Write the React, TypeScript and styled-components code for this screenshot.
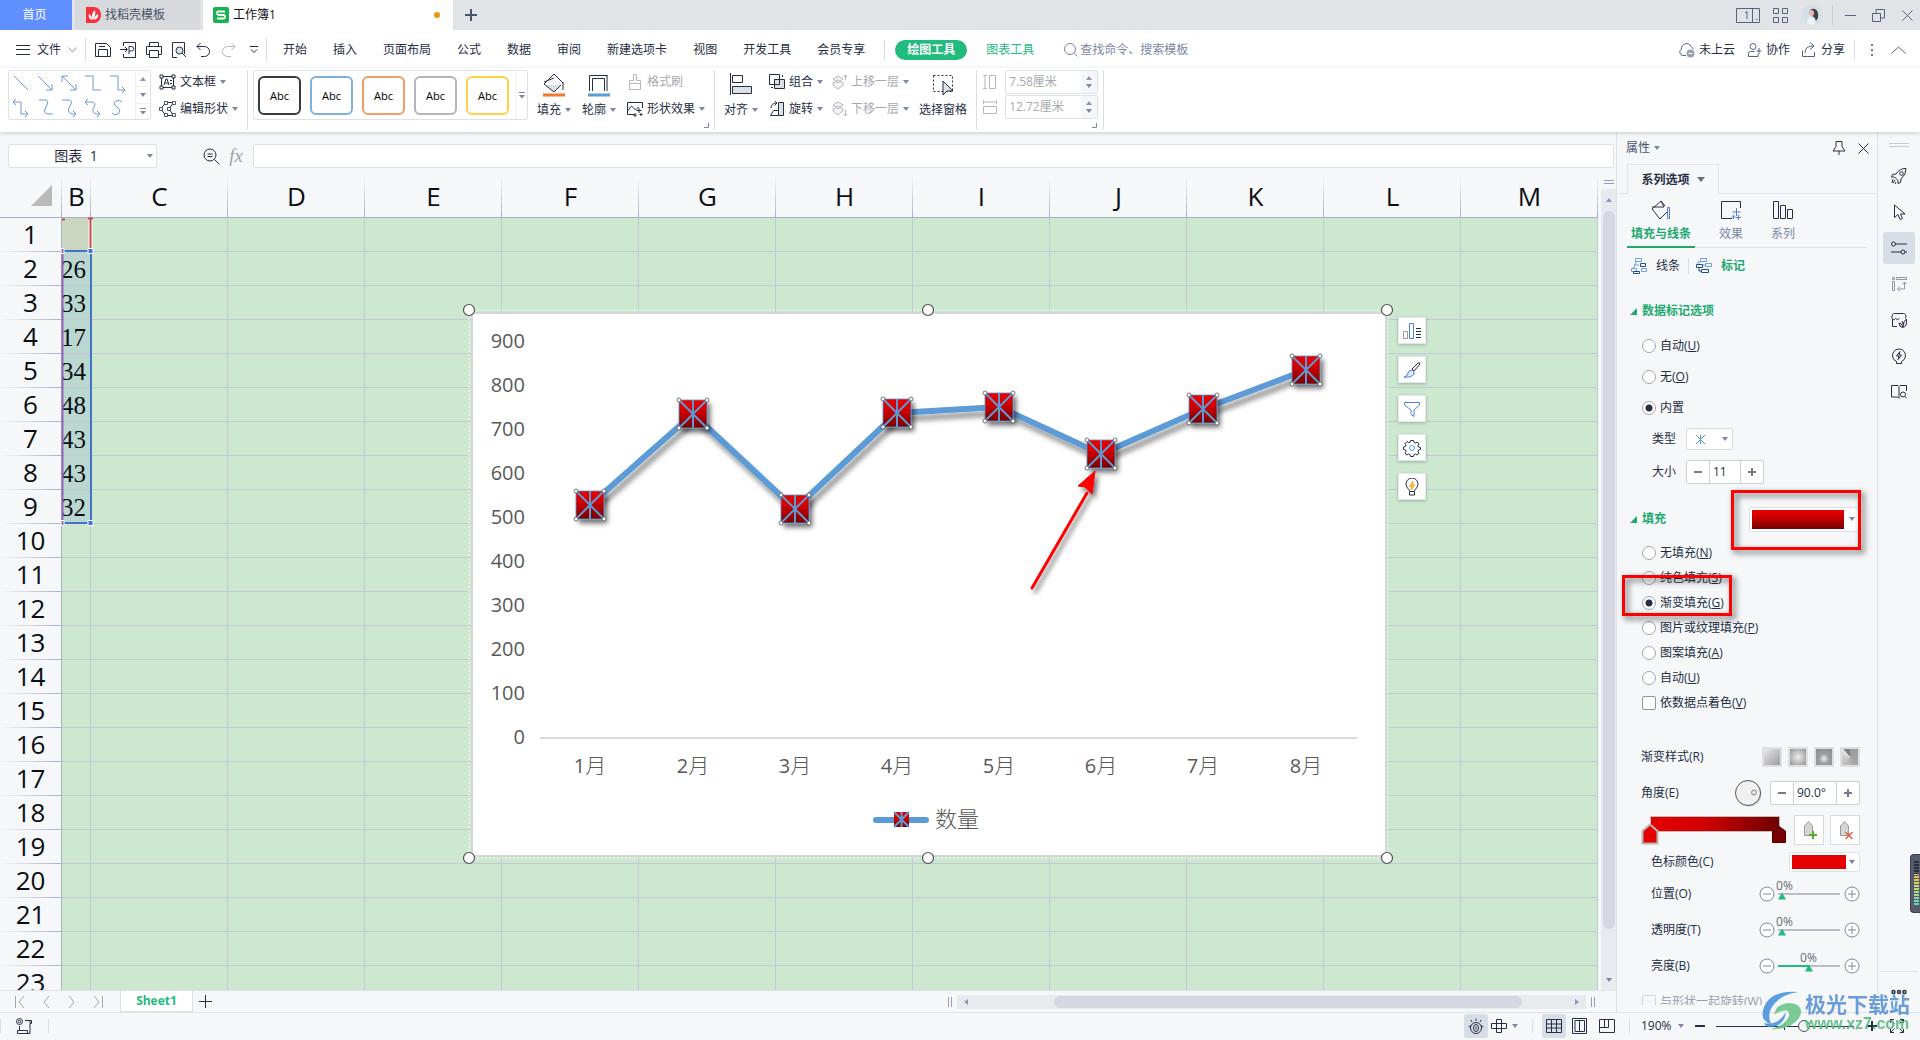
import React from 'react';
import styled, { createGlobalStyle, css } from 'styled-components';

const c = {
  ink: '#262E44',
  muted: '#7C87A3',
  faint: '#A6A9AF',
  line: '#DEE1E9',
  pane: '#F5F7F9',
  green: '#21BB7E',
  deepGreen: '#1FA971',
  grid: '#C1C9D6',
  head: '#A9B1C8',
  cell: '#CCE8CF',
  blue: '#6E96DB',
};

const Global = createGlobalStyle`
  * { box-sizing: border-box; }
  html, body, #root { height: 100%; }
  body {
    margin: 0;
    overflow: hidden;
    background: ${c.pane};
    color: ${c.ink};
    font: 12px/16px "Open Sans", "Noto Sans CJK SC", sans-serif;
  }
  button, input, select { font: inherit; color: inherit; margin: 0; }
  button { border: 0; background: none; padding: 0; white-space: nowrap; }
  svg { display: block; flex: none; }
`;

const App_ = styled.div`
  height: 100vh;
  display: flex;
  flex-direction: column;
`;

/* ---------- icons ---------- */
type IconProps = { w?: number; h?: number; color?: string; sw?: number; fill?: string; children: React.ReactNode };
const Icon = ({ w = 16, h = 16, color = c.ink, sw = 1, fill = 'none', children }: IconProps) => (
  <svg width={w} height={h} viewBox={`0 0 ${w} ${h}`} fill={fill} stroke={color} strokeWidth={sw} aria-hidden="true">
    {children}
  </svg>
);
const Caret = ({ color = c.muted }: { color?: string }) => (
  <svg width="6" height="4" viewBox="0 0 6 4" fill={color} aria-hidden="true"><path d="M0 0h6L3 4z" /></svg>
);
const CaretUp = () => (
  <svg width="6" height="4" viewBox="0 0 6 4" fill="#8C98B5" aria-hidden="true"><path d="M0 4h6L3 0z" /></svg>
);
const MoreCaret = () => (
  <Icon w={6} h={8} color={c.muted}><path d="M0 1.5h6" /><path d="M0 4h6L3 7.5z" fill={c.muted} stroke="none" /></Icon>
);

/* ---------- title bar ---------- */
const TitleBar = styled.header`
  height: 30px;
  flex: none;
  display: flex;
  background: #E1E3E6;
`;
const HomeTab = styled.button`
  width: 72px;
  padding-right: 3px;
  margin-right: 3px;
  background: #6090FF;
  color: #fff;
`;
const DocTab = styled.button<{ $active?: boolean; $w: number }>`
  width: ${p => p.$w}px;
  display: flex;
  align-items: center;
  gap: 4px;
  padding: 0 13px 0 ${p => (p.$active ? 10 : 11)}px;
  margin-right: 3px;
  background: ${p => (p.$active ? '#fff' : '#D8D9DC')};
  color: ${p => (p.$active ? '#111' : '#4A5166')};
`;
const Unsaved = styled.i`
  width: 6px;
  height: 6px;
  border-radius: 50%;
  margin-left: auto;
  background: #E69A0B;
`;
const IconButton = styled.button<{ $w?: number; $h?: number; $on?: boolean }>`
  width: ${p => p.$w ?? 24}px;
  height: ${p => p.$h ?? 24}px;
  flex: none;
  display: flex;
  align-items: center;
  justify-content: center;
  border-radius: 2px;
  background: ${p => (p.$on ? '#D9DEE6' : 'none')};
`;
const WindowTools = styled.div`
  margin-left: auto;
  padding-right: 1px;
  display: flex;
  align-items: center;
`;
const Rule = styled.i<{ $h?: number; $m?: string; $color?: string }>`
  width: 1px;
  flex: none;
  height: ${p => p.$h ?? 20}px;
  margin: ${p => p.$m ?? '0'};
  background: ${p => p.$color ?? '#DADDE5'};
`;

const Title = () => (
  <TitleBar>
    <HomeTab>首页</HomeTab>
    <DocTab $w={125}>
      <svg width="15" height="16" viewBox="0 0 15 16" aria-hidden="true">
        <path d="M0 0h8a7 8 0 0 1 7 8 7 8 0 0 1-7 8H0z" fill="#F7303E" />
        <path d="M7 13C5 10 6 5 9 3c1 3 0 7-2 10zM6 13C3 12 2 9 3 7c2 1 3 3 3 6zM8 13c3-1 5-3 4-6-2 1-4 3-4 6z" fill="#fff" />
      </svg>
      找稻壳模板
    </DocTab>
    <DocTab $w={250} $active>
      <svg width="16" height="16" viewBox="0 0 16 16" aria-hidden="true">
        <rect width="16" height="16" rx="2" fill="#17B351" />
        <path d="M12 4.500H5.500Q4 4.500 4 6T5.500 8h5Q12 8 12 9.700T10.500 11.500H4" fill="none" stroke="#fff" strokeWidth="1.800" />
      </svg>
      工作簿1
      <Unsaved />
    </DocTab>
    <IconButton $w={30} $h={30} aria-label="新建">
      <Icon w={12} h={12} color="#48536E" sw={2}><path d="M6 0v12M0 6h12" /></Icon>
    </IconButton>
    <WindowTools>
      <IconButton $w={36} aria-label="窗口布局">
        <Icon w={24} h={15} color="#56627F"><path d="M.5.500h23v14H.5zM16.500.500v14M9 5l2-1.500V11M20 11.500h1.500" /></Icon>
      </IconButton>
      <IconButton $w={28} aria-label="应用">
        <Icon w={15} h={15} color="#56627F"><path d="M.5.500h5v5h-5zM9.500.500h5v5h-5zM.5 9.500h5v5h-5zM9.500 9.500h5v5h-5z" /></Icon>
      </IconButton>
      <IconButton $w={36} aria-label="账户">
        <svg width="20" height="20" viewBox="0 0 20 20" aria-hidden="true">
          <circle cx="10" cy="10" r="10" fill="#D0E1E8" />
          <path d="M7 8q1-5 6-4 4 2 3 9l-2 3q-1-4-4-5z" fill="#4A3E44" />
          <ellipse cx="9.500" cy="8" rx="2.500" ry="3" fill="#E4BEB0" />
          <path d="M5 18q0-5 4-6 4 1 4 7-4 2-8-1z" fill="#F1F4F6" />
        </svg>
      </IconButton>
      <Rule $m="0 6px 0 2px" $color="#C9CCD2" />
      <IconButton $w={22} aria-label="最小化"><Icon w={11} h={11} color="#56627F"><path d="M0 5.500h11" /></Icon></IconButton>
      <IconButton $w={34} aria-label="还原">
        <Icon w={13} h={13} color="#56627F"><path d="M.5 4.500h8v8h-8zM4 4V.500h8.500V9H9" /></Icon>
      </IconButton>
      <IconButton $w={24} aria-label="关闭"><Icon w={11} h={11} color="#56627F"><path d="M.5.500l10 10M10.500.500l-10 10" /></Icon></IconButton>
    </WindowTools>
  </TitleBar>
);

/* ---------- menu row ---------- */
const MenuBar = styled.nav`
  height: 38px;
  flex: none;
  display: flex;
  align-items: center;
  background: #fff;
  padding: 2px 7px 0 16px;
`;
const FileButton = styled.button`
  display: flex;
  align-items: center;
  gap: 7px;
`;
const MenuItems = styled.div`
  display: flex;
  gap: 26px;
  margin-left: 16px;
`;
const ToolPill = styled.button`
  height: 20px;
  padding: 0 12px;
  margin-left: 10px;
  border-radius: 10px;
  background: ${c.green};
  color: #fff;
  font-weight: 700;
`;
const GreenItem = styled.button`
  margin: 0 30px 0 19px;
  color: ${c.green};
`;
const SearchBox = styled.label`
  display: flex;
  align-items: center;
  gap: 2px;
  color: ${c.muted};
`;
const SearchInput = styled.input`
  width: 140px;
  border: 0;
  padding: 0;
  outline: 0;
  background: none;
  &::placeholder { color: ${c.muted}; opacity: 1; }
`;
const MenuRight = styled.div`
  margin-left: auto;
  display: flex;
  align-items: center;
`;
const TextTool = styled.button<{ $gap?: number; $mr?: number; $off?: boolean }>`
  display: flex;
  align-items: center;
  gap: ${p => p.$gap ?? 4}px;
  margin-right: ${p => p.$mr ?? 0}px;
  color: ${p => (p.$off ? c.faint : 'inherit')};
`;

const menus = ['开始', '插入', '页面布局', '公式', '数据', '审阅', '新建选项卡', '视图', '开发工具', '会员专享'];

const Menu = () => (
  <MenuBar>
    <FileButton>
      <Icon w={14} h={10}><path d="M0 .500h14M0 4.500h14M0 9.500h14" /></Icon>
      文件
      <Icon w={9} h={6} color="#8A93A8"><path d="M.5.500l4 4.500 4-4.500" /></Icon>
    </FileButton>
    <Rule $h={24} $m="0 4px 0 8px" />
    <IconButton $w={25} aria-label="保存"><Icon><path d="M.5 1.500h11l4 4v9H.5zM3.500 14V7.500h9V14M4 4.500h6" /></Icon></IconButton>
    <IconButton $w={26} aria-label="输出为PDF"><Icon><path d="M3.500 4V.500h12v15h-12V12M0 7.500h7M5 5l2.500 2.500L5 10M9 12V4.500h2.500a2 2 0 0 1 0 4.500H9" /></Icon></IconButton>
    <IconButton $w={25} aria-label="打印"><Icon><path d="M3.500 4V.500h9V4M3.500 12.500h-3v-8h15v8h-3M3.500 8.500h9v7h-9z" /></Icon></IconButton>
    <IconButton $w={25} aria-label="打印预览"><Icon><path d="M6 15.500H1.500V.500h12V12" /><circle cx="8.500" cy="8.500" r="3.500" fill="#DDE1E8" /><path d="M11 11l4 4" /></Icon></IconButton>
    <IconButton $w={24} aria-label="撤销"><Icon><path d="M5.500 1L2 4.500 5.500 8M2 4.500h7.500a5 5 0 0 1 0 10H6" /></Icon></IconButton>
    <IconButton $w={27} aria-label="恢复"><Icon color="#B4B7BD"><path d="M10.500 1L14 4.500 10.500 8M14 4.500H6.500a5 5 0 0 0 0 10H10" /></Icon></IconButton>
    <IconButton $w={24} aria-label="自定义快速访问"><Icon w={8} h={8}><path d="M0 .500h8M1 3.500l3 3 3-3" /></Icon></IconButton>
    <Rule $h={24} />
    <MenuItems>{menus.map(m => <button key={m}>{m}</button>)}</MenuItems>
    <Rule $m="0 0 0 19px" />
    <ToolPill>绘图工具</ToolPill>
    <GreenItem>图表工具</GreenItem>
    <SearchBox>
      <Icon w={14} h={14} color={c.muted}><circle cx="6" cy="6" r="5.500" /><path d="M10 10l3.500 3.500" /></Icon>
      <SearchInput aria-label="搜索" placeholder="查找命令、搜索模板" />
    </SearchBox>
    <MenuRight>
      <TextTool $mr={12}>
        <Icon color="#56627F"><path d="M7 13.500H4A3.500 3.500 0 0 1 2.500 7 5 5 0 0 1 12 4.500 4 4 0 0 1 14 7" /><circle cx="11.500" cy="11.500" r="4" fill="#98A1B5" stroke="none" /><path d="M9.500 11.500h4" stroke="#fff" /></Icon>
        未上云
      </TextTool>
      <TextTool $mr={11}>
        <Icon w={15} color="#56627F"><circle cx="6" cy="4.500" r="3" /><path d="M9 14.500H1.500v-3a2 2 0 0 1 2-2h4M12 6v6M9.500 9h5M9 14.500h2V12" /></Icon>
        协作
      </TextTool>
      <TextTool $mr={9}>
        <Icon color="#56627F"><path d="M1.500 8.500v6h12V10M4 11q0-7 8-7M9 .500l4 3.500-4 3.500" /></Icon>
        分享
      </TextTool>
      <Rule $m="0 5px 0 0" />
      <IconButton $w={24} aria-label="更多"><Icon w={2} h={14} color="none" fill="#6F7890"><path d="M0 1h2v2H0zM0 6h2v2H0zM0 11h2v2H0z" /></Icon></IconButton>
      <IconButton $w={29} aria-label="收起功能区"><Icon w={15} h={8} color="#56627F"><path d="M.5 7.500l7-6.500 7 6.500" /></Icon></IconButton>
    </MenuRight>
  </MenuBar>
);

/* ---------- ribbon ---------- */
const Ribbon = styled.div`
  height: 64px;
  flex: none;
  display: flex;
  background: #fff;
  padding: 2px 8px 0;
  position: relative;
  z-index: 2;
  box-shadow: 0 1px 4px rgba(60, 70, 90, .25);
`;
const Gallery = styled.div`
  height: 50px;
  display: flex;
  border: 1px solid ${c.line};
  border-radius: 2px;
`;
const ShapeGrid = styled.div`
  display: grid;
  grid-template-columns: repeat(5, 24px);
  grid-auto-rows: 24px;
`;
const GalleryScroll = styled.div<{ $w: number }>`
  width: ${p => p.$w}px;
  margin-left: 6px;
  display: flex;
  flex-direction: column;
  border-left: 1px solid #EEF0F4;
`;
const ScrollStep = styled.button`
  flex: 1;
  display: flex;
  align-items: center;
  justify-content: center;
  & + & { border-top: 1px solid #EEF0F4; }
`;
const StackGroup = styled.div<{ $ml?: number }>`
  display: flex;
  flex-direction: column;
  height: 50px;
  margin-left: ${p => p.$ml ?? 0}px;
  padding: 4px 0 3px;
  justify-content: space-between;
`;
const StyleSwatches = styled.div`
  display: flex;
  gap: 9px;
  padding: 5px 0 0 4px;
`;
const StyleSwatch = styled.button<{ $color: string }>`
  width: 43px;
  height: 39px;
  border: 2px solid ${p => p.$color};
  border-radius: 6px;
  background: #fff;
  color: #000;
  font-size: 11px;
`;
const BigTool = styled.button<{ $ml?: number }>`
  height: 50px;
  margin-left: ${p => p.$ml ?? 0}px;
  padding: 3px 0 2px;
  display: flex;
  flex-direction: column;
  align-items: center;
  justify-content: space-between;
`;
const BigLabel = styled.span`
  display: flex;
  align-items: center;
  gap: 4px;
`;
const Corner = styled.button<{ $overlap: number }>`
  align-self: flex-end;
  margin-left: -${p => p.$overlap}px;
  padding-bottom: 4px;
`;
const Fields = styled.div`
  display: flex;
  flex-direction: column;
  gap: 1px;
  margin-left: 6px;
`;
const FieldRow = styled.label`
  height: 24px;
  display: flex;
  align-items: center;
  gap: 8px;
`;
const Spin = styled.span`
  width: 93px;
  height: 24px;
  display: flex;
  border: 1px solid ${c.line};
  border-radius: 2px;
`;
const SpinInput = styled.input`
  flex: 1;
  min-width: 0;
  border: 0;
  padding: 0 0 0 3px;
  background: none;
  color: ${c.faint};
`;
const SpinArrows = styled.span`
  width: 16px;
  display: flex;
  flex-direction: column;
  align-items: center;
  justify-content: space-evenly;
  background: #F5F6F9;
`;

const lineShapes = [
  'M2 2l14 14', 'M2 2l14 14M16 10v6h-6', 'M2 2l14 14M16 10v6h-6M2 8V2h6', 'M1 2h8v14h8', 'M2 2h8v14h7M14 13l3 3-3 3',
  'M1 4h8v12h6M4 1L1 4l3 3M13 13l3 3-3 3', 'M3 2h6q5 0 1 7t3 7h4', 'M2 2h6q6 0 2 6t2 8h4M13 13l3 3-3 3', 'M1 4h6q6 0 3 5t2 7h4M4 1L1 4l3 3M13 13l3 3-3 3', 'M14 4q-2-3-6-1-4 3 1 6t1 7q-4 2-6-1',
];
const swatches = ['#3B3B3B', '#7EB0E0', '#F29C66', '#B5B5B5', '#FFD04A'];

const CornerMark = ({ overlap }: { overlap: number }) => (
  <Corner $overlap={overlap} aria-label="更多设置"><Icon w={5} h={5} color={c.muted}><path d="M4.500 0v4.500H0" /></Icon></Corner>
);

const RibbonBar = () => (
  <Ribbon>
    <Gallery>
      <ShapeGrid>
        {lineShapes.map(d => (
          <IconButton key={d} aria-label="连接线"><Icon w={18} h={19} color={c.blue}><path d={d} /></Icon></IconButton>
        ))}
      </ShapeGrid>
      <GalleryScroll $w={15}>
        <ScrollStep aria-label="上一行"><CaretUp /></ScrollStep>
        <ScrollStep aria-label="下一行"><Caret /></ScrollStep>
        <ScrollStep aria-label="更多形状"><MoreCaret /></ScrollStep>
      </GalleryScroll>
    </Gallery>
    <StackGroup $ml={8}>
      <TextTool>
        <Icon w={17}><path d="M2.500 2.500h12v11h-12z" /><path d="M1 1h3v3H1zM13 1h3v3h-3zM1 12h3v3H1zM13 12h3v3h-3z" fill="#fff" /><path d="M5 11l2-6h1l2 6M6 9h3M11 6.500h2M11 9.500h2" /></Icon>
        文本框 <Caret />
      </TextTool>
      <TextTool>
        <Icon w={17}><path d="M7 1.500L1.500 8 7 14.500M14.500 1.500L10 8l4.500 6.500M8 1.500h7M8 14.500h7" /><path d="M5.500.500h3v3h-3zM13.500.500h3v3h-3zM.5 6.500h3v3h-3zM8.500 6.500h3v3h-3zM5.500 12.500h3v3h-3zM13.500 12.500h3v3h-3z" fill="#fff" strokeWidth=".800" /></Icon>
        编辑形状 <Caret />
      </TextTool>
    </StackGroup>
    <Rule $h={60} $m="0 5px 0 9px" />
    <Gallery>
      <StyleSwatches>{swatches.map(s => <StyleSwatch key={s} $color={s}>Abc</StyleSwatch>)}</StyleSwatches>
      <GalleryScroll $w={12}><ScrollStep aria-label="更多样式"><MoreCaret /></ScrollStep></GalleryScroll>
    </Gallery>
    <BigTool $ml={9}>
      <Icon w={24} h={24}><path d="M4 12h15l-7 7z" fill="#DDE0E5" stroke="none" /><path d="M2 11L12 1l9 9M21 9v8M2 11l10 8 7-7M2 9l10-4" /><path d="M1 22h22" stroke="#EE7A31" strokeWidth="3" /></Icon>
      <BigLabel>填充 <Caret /></BigLabel>
    </BigTool>
    <BigTool $ml={11}>
      <Icon w={24} h={24}><path d="M2.500 18V2.500h18V18M5.500 18V5.500h12V18" /><path d="M20 3v15" stroke="#8E939D" strokeWidth="2" /><path d="M1 22h22" stroke="#5B9BD5" strokeWidth="3" /></Icon>
      <BigLabel>轮廓 <Caret /></BigLabel>
    </BigTool>
    <StackGroup $ml={11}>
      <TextTool $off>
        <Icon color="#B4B7BD"><path d="M6.500.500h3v6h4v9h-11v-9h4zM2.500 9.500h11" /></Icon>
        格式刷
      </TextTool>
      <TextTool>
        <Icon><path d="M7 13.500H.5v-12h15V7M.5 10l4-5 4 4 3-3" /><path d="M12 7v5M9.500 9.500h5M8 12v4M6 14h4M14 12v3M12.500 13.500h3" /></Icon>
        形状效果 <Caret />
      </TextTool>
    </StackGroup>
    <CornerMark overlap={1} />
    <Rule $h={60} $m="0 9px 0 5px" />
    <BigTool>
      <Icon w={24} h={22}><path d="M1.500 0v22M3.500 2.500h10v7h-10z" /><path d="M3.500 13.500h19v7h-19z" fill="#DDE0E5" /></Icon>
      <BigLabel>对齐 <Caret /></BigLabel>
    </BigTool>
    <StackGroup $ml={11}>
      <TextTool>
        <Icon><path d="M.5.500h10v10H.5z" /><path d="M5.500 5.500h10v9h-10z" fill="#DDE0E5" /><path d="M5.500 5.500h5v5h-5zM13.500 1v2M2 13.500h2" /></Icon>
        组合 <Caret />
      </TextTool>
      <TextTool>
        <Icon><path d="M9.500 1.500h5v13h-5z" fill="#DDE0E5" /><path d="M9.500 14.500h-8l3-5h5M2 7q0-5 6-5M5.500 0L8 2 5.500 4.500" /></Icon>
        旋转 <Caret />
      </TextTool>
    </StackGroup>
    <StackGroup $ml={8}>
      <TextTool $off>
        <Icon color="#B4B7BD"><path d="M7 2l5 3-5 4-5-4zM2 9l5-3 5 3v2l-5 4-5-4zM14.500 6V1M12.500 3l2-2 1.500 2" fill="#F2F3F4" /></Icon>
        上移一层 <Caret />
      </TextTool>
      <TextTool $off>
        <Icon color="#B4B7BD"><path d="M7 1l5 3-5 4-5-4zM2 8l5-3 5 3v2l-5 4-5-4zM14.500 9v5M12.500 13l2 2 1.500-2" fill="#F2F3F4" /></Icon>
        下移一层 <Caret />
      </TextTool>
    </StackGroup>
    <BigTool $ml={10}>
      <Icon w={24} h={24}><path d="M2.500 2.500h19v16h-19z" strokeDasharray="2 2" /><path d="M12 8v14l4-4h6z" fill="#DDE0E5" /></Icon>
      <BigLabel>选择窗格</BigLabel>
    </BigTool>
    <Rule $h={60} $m="0 0 0 9px" />
    <Fields>
      <FieldRow>
        <Icon w={14} h={14} color="#B4B7BD"><path d="M0 .500h4M2 .500v13M0 13.500h4M6.500.500h6v13h-6z" /></Icon>
        <Spin><SpinInput aria-label="高度" readOnly value="7.58厘米" /><SpinArrows><CaretUp /><Caret /></SpinArrows></Spin>
      </FieldRow>
      <FieldRow>
        <Icon w={14} h={14} color="#B4B7BD"><path d="M.5 0v4M.5 2h13M13.500 0v4M.5 6.500h13v7H.5z" /></Icon>
        <Spin><SpinInput aria-label="宽度" readOnly value="12.72厘米" /><SpinArrows><CaretUp /><Caret /></SpinArrows></Spin>
      </FieldRow>
    </Fields>
    <CornerMark overlap={6} />
    <Rule $h={60} $m="0 0 0 6px" />
  </Ribbon>
);

/* ---------- workspace ---------- */
const Main = styled.main`
  flex: 1;
  min-height: 0;
  display: flex;
`;
const Work = styled.section`
  flex: 1;
  min-width: 0;
  display: flex;
  flex-direction: column;
`;
const FormulaBar = styled.div`
  height: 44px;
  flex: none;
  display: flex;
  align-items: center;
  padding: 4px 2px 0 8px;
`;
const NameBox = styled.label`
  width: 149px;
  height: 24px;
  display: flex;
  align-items: center;
  padding-right: 3px;
  margin-right: 42px;
  background: #fff;
  border: 1px solid ${c.line};
  border-radius: 2px;
`;
const NameInput = styled.input`
  flex: 1;
  min-width: 0;
  border: 0;
  padding: 0 4px 0 0;
  background: none;
  text-align: center;
  font-size: 14px;
  white-space: pre;
`;
const FormulaInput = styled.input`
  flex: 1;
  height: 24px;
  margin-left: 4px;
  border: 1px solid ${c.line};
  border-radius: 2px;
  background: #fff;
`;
const Fx = styled.i`
  font: italic 19px/20px "Liberation Serif", serif;
  color: #A0A3A9;
`;
const SheetArea = styled.div`
  flex: 1;
  min-height: 0;
  display: flex;
`;
const SheetView = styled.div`
  flex: 1;
  min-width: 0;
  overflow: hidden;
  position: relative;
`;
const Grid = styled.table`
  width: 1598px;
  table-layout: fixed;
  border-spacing: 0;
  color: #0B0D14;
`;
const Col = styled.col<{ $w: number }>`
  width: ${p => p.$w}px;
`;
const ColHead = styled.th`
  height: 42px;
  padding: 0 0 2px;
  font-size: 26px;
  font-weight: 400;
  line-height: 36px;
  background: linear-gradient(rgba(169, 177, 200, 0), ${c.head}) right / 1px 100% no-repeat ${c.pane};
  border-bottom: 1px solid ${c.head};
`;
const RowHead = styled.th`
  height: 34px;
  padding: 0 0 3px;
  font-size: 26px;
  font-weight: 400;
  line-height: 30px;
  background: linear-gradient(90deg, rgba(169, 177, 200, 0), ${c.head}) bottom / 100% 1px no-repeat ${c.pane};
  border-right: 1px solid ${c.head};
`;
const Cell = styled.td<{ $tint?: string }>`
  height: 34px;
  padding: 3px 5px 0 0;
  overflow: hidden;
  background: ${p => p.$tint ?? c.cell};
  border: solid ${c.grid};
  border-width: 0 1px 1px 0;
  font: 25px/30px "Liberation Serif", serif;
  text-align: right;
  direction: rtl;
`;
const SelectAll = styled.svg`
  margin: 0 10px 0 auto;
`;
const RangeLayer = styled.svg`
  position: absolute;
  left: 60px;
  top: 40px;
`;

const columns = 'BCDEFGHIJKLM'.split('');
const bValues: Record<number, string> = { 2: '26', 3: '33', 4: '17', 5: '34', 6: '48', 7: '43', 8: '43', 9: '32' };

const Sheet = () => (
  <Grid>
    <colgroup>
      <Col $w={62} />
      {columns.map(k => <Col key={k} $w={k === 'B' ? 29 : 137} />)}
    </colgroup>
    <thead>
      <tr>
        <ColHead aria-label="全选"><SelectAll width="21" height="21" viewBox="0 0 21 21"><path d="M21 0v21H0z" fill="#B9B9B9" /></SelectAll></ColHead>
        {columns.map(k => <ColHead key={k} scope="col">{k}</ColHead>)}
      </tr>
    </thead>
    <tbody>
      {Array.from({ length: 23 }, (_, i) => i + 1).map(r => (
        <tr key={r}>
          <RowHead scope="row">{r}</RowHead>
          {columns.map(k => (
            <Cell key={k} $tint={k !== 'B' ? undefined : r === 1 ? '#CBD6C0' : r < 10 ? '#BBD8D0' : undefined}>
              {k === 'B' ? bValues[r] : null}
            </Cell>
          ))}
        </tr>
      ))}
    </tbody>
  </Grid>
);

const Range = () => (
  <RangeLayer width="36" height="314" viewBox="0 0 36 314" aria-hidden="true">
    <path d="M30.500 3v32" stroke="#fff" strokeWidth="4" />
    <path d="M30.500 3v32M2 3.500h3M28 2.500h5" stroke="#C8494B" strokeWidth="2" />
    <path d="M2.500 35v272" stroke="#9467BD" strokeWidth="2" />
    <path d="M4 35h27v272H4" fill="none" stroke="#4472C9" strokeWidth="2" />
    <path d="M28 32.500h5v5h-5zM28 304.500h5v5h-5z" fill="#4472D9" stroke="#fff" />
    <path d="M1 32.500h3v5H1zM1 304.500h3v5H1z" fill="#9467BD" stroke="#fff" />
  </RangeLayer>
);

/* ---------- chart ---------- */
const ChartLayer = styled.svg`
  position: absolute;
  left: 462px;
  top: 127px;
`;
const AxisText = styled.text`
  font: 300 20px "Open Sans", "Noto Sans CJK SC", sans-serif;
  fill: #595959;
`;
const AxisNumber = styled(AxisText)`
  font-weight: 400;
  text-anchor: end;
`;
const MonthText = styled(AxisText)`
  text-anchor: middle;
  font-size: 21px;
`;
const MonthDigit = styled.tspan`
  font-size: 20px;
  font-weight: 400;
`;
const LegendText = styled(AxisText)`
  font-size: 22px;
`;

/* Points are in the chart layer's own coordinates. */
const points: [number, number][] = [[128, 202], [231, 111], [333, 206], [435, 110], [537, 104], [639, 151], [741, 106], [844, 67]];

const Marker = ({ x, y }: { x: number; y: number }) => (
  <g transform={`translate(${x} ${y})`}>
    <g filter="url(#shadow)">
      <rect x="-14" y="-14" width="28" height="28" fill="url(#red)" stroke="#5B9BD5" strokeWidth=".800" />
    </g>
    <path d="M-14-14L14 14M14-14L-14 14M0-14v28" stroke="#5B9BD5" strokeWidth="2" />
    {[[-14, -14], [14, -14], [-14, 14], [14, 14]].map(([a, b]) => (
      <circle key={`${a}${b}`} cx={a} cy={b} r="2" fill="#fff" stroke="#555" strokeWidth=".800" />
    ))}
  </g>
);

const Chart = () => (
  <ChartLayer width="940" height="564" viewBox="0 0 940 564" role="img" aria-label="数量">
    <defs>
      <linearGradient id="red" x1="0" y1="0" x2="0" y2="1">
        <stop offset="0" stopColor="#E60000" /><stop offset=".35" stopColor="#D60000" /><stop offset="1" stopColor="#760000" />
      </linearGradient>
      <filter id="shadow" x="-50%" y="-50%" width="200%" height="200%">
        <feDropShadow dx="3" dy="4" stdDeviation="2.500" floodOpacity=".55" />
      </filter>
      <filter id="soft" x="-10%" y="-10%" width="120%" height="130%">
        <feDropShadow dx="3" dy="6" stdDeviation="2.500" floodOpacity=".4" />
      </filter>
    </defs>
    <rect x="7" y="7" width="919" height="548" fill="none" stroke="#fff" strokeWidth="1" strokeDasharray="2 2" opacity=".8" />
    <rect x="10" y="10" width="914" height="543" fill="#fff" stroke="#D5D7D6" strokeWidth="2" />
    {[900, 800, 700, 600, 500, 400, 300, 200, 100, 0].map((v, i) => (
      <AxisNumber key={v} x="63" y={45 + i * 44}>{v}</AxisNumber>
    ))}
    <path d="M78 435h817" stroke="#D9D9D9" strokeWidth="2" />
    {points.map(([x], i) => <MonthText key={i} x={x} y="470"><MonthDigit>{i + 1}</MonthDigit>月</MonthText>)}
    <polyline points={points.map(p => p.join()).join(' ')} fill="none" stroke="#5B9BD5" strokeWidth="6" strokeLinejoin="round" filter="url(#soft)" />
    {points.map(([x, y]) => <Marker key={x} x={x} y={y} />)}
    <path d="M414 517h50" stroke="#5B9BD5" strokeWidth="6" strokeLinecap="round" />
    <rect x="432" y="509" width="15" height="15" fill="url(#red)" />
    <path d="M432 509l15 15M447 509l-15 15M439.500 509v15" stroke="#5B9BD5" strokeWidth="2" />
    <LegendText x="473" y="524">数量</LegendText>
    {[[7, 7], [466, 7], [925, 7], [7, 555], [466, 555], [925, 555]].map(([x, y]) => (
      <circle key={`${x}-${y}`} cx={x} cy={y} r="5.500" fill="#fff" stroke="#4F4F4F" strokeWidth="1.200" />
    ))}
    <g filter="url(#shadow)">
      <path d="M570 285L625 190" stroke="#FF0000" strokeWidth="3" strokeLinecap="round" />
      <path d="M633 168l-17 15 7 1 7 7z" fill="#FF0000" stroke="#FF0000" />
    </g>
  </ChartLayer>
);

const ChartTools = styled.div`
  position: absolute;
  left: 1398px;
  top: 141px;
  display: flex;
  flex-direction: column;
  gap: 12px;
`;
const ChartTool = styled.button`
  width: 28px;
  height: 27px;
  display: flex;
  align-items: center;
  justify-content: center;
  background: #fff;
  border: 1px solid #E3E6EA;
  box-shadow: 0 1px 3px rgba(40, 60, 50, .3);
`;

const ChartToolbar = () => (
  <ChartTools>
    <ChartTool aria-label="图表元素"><Icon w={18} h={18}><path d="M.5 9.500h4v7h-4z" stroke="#999" /><path d="M6.500 1.500h4v15h-4z" stroke="#4F7FE0" /><path d="M13 6.500h5M13 9.500h5M13 12.500h5M13 15.500h5" /></Icon></ChartTool>
    <ChartTool aria-label="图表样式"><Icon w={18} h={18}><path d="M9 8l6-6q2-1 2 1l-6 7z" /><path d="M1 16q3 0 4-4 1-3 4-3 3 1 2 4-3 4-10 3z" fill="#DCE7FB" stroke="#4F7FE0" /></Icon></ChartTool>
    <ChartTool aria-label="图表筛选器"><Icon w={18} h={18} color="#4F7FE0"><path d="M1.500 2.500h15V5L11 10v6.500l-3-2V10L1.500 5z" /></Icon></ChartTool>
    <ChartTool aria-label="设置"><Icon w={18} h={18}><path d="M7.500 1.500h3l.5 2 1.500.500 1.800-1 1.700 2-1 1.800.500 1.200 2 .500v2l-2 .500-.500 1.500 1 1.800-2 1.700-1.500-1-1.500.500-.500 2h-3l-.500-2-1.500-.500-1.800 1-1.700-2 1-1.500-.500-1.500-2-.500V8l2-.500.500-1.500-1-1.500 2-2 1.500 1L7 3.500z" /><circle cx="9" cy="9" r="2.500" stroke="#4F9FE0" /></Icon></ChartTool>
    <ChartTool aria-label="智能推荐"><Icon w={18} h={18}><path d="M6.500 13.500q0-2-2-3.500a6 6 0 1 1 9 0q-2 1.500-2 3.500zM6.500 14v3h5v-3" /><path d="M10 3L6.500 8.500H9L8 12l4-5H9.500z" fill="#FFC92E" stroke="#E99A1C" strokeWidth=".800" /></Icon></ChartTool>
  </ChartTools>
);

/* ---------- scroll bars, sheet tabs ---------- */
const VScroll = styled.div`
  width: 15px;
  flex: none;
  display: flex;
  flex-direction: column;
  align-items: center;
  background: linear-gradient(${c.pane} 13px, #E8EAF0 13px);
`;
const SplitMark = styled.i<{ $v?: boolean }>`
  flex: none;
  ${p => p.$v
    ? css`width: 4px; height: 10px; border: solid #8FA0BC; border-width: 0 1px;`
    : css`width: 10px; height: 4px; margin: 4px 0 14px; border: solid #8FA0BC; border-width: 1px 0;`}
`;
const VThumb = styled.div`
  flex: 1;
  width: 12px;
  margin: 9px 0 49px;
  border-radius: 6px;
  background: #D5D8E1;
`;
const VEnd = styled.div`
  padding-bottom: 8px;
`;
const TabsBar = styled.div`
  height: 22px;
  flex: none;
  display: flex;
  align-items: center;
  padding: 0 21px 0 7px;
  border-top: 1px solid ${c.line};
`;
const SheetTab = styled.button`
  width: 73px;
  height: 21px;
  margin: 0 0 0 9px;
  background: #fff;
  border: solid ${c.line};
  border-width: 0 1px 1px;
  color: ${c.green};
  font-weight: 700;
`;
const HScroll = styled.div`
  width: 629px;
  height: 14px;
  margin: 0 5px;
  padding: 1px 7px;
  display: flex;
  align-items: center;
  background: #E8EAF0;
`;
const HThumb = styled.div`
  flex: 1;
  height: 12px;
  margin: 0 53px 0 86px;
  border-radius: 6px;
  background: #D5D8E1;
`;
const Spacer = styled.div`
  flex: 1;
`;

const navPaths = ['M1.500 1v12M10 1L5 7l5 6', 'M9 1L4 7l5 6', 'M3 1l5 6-5 6', 'M2 1l5 6-5 6M10.500 1v12'];

const SheetTabs = () => (
  <TabsBar>
    {navPaths.map(d => <IconButton key={d} $w={26} $h={20} aria-label="切换工作表"><Icon w={12} h={14} color="#A2A7B2"><path d={d} /></Icon></IconButton>)}
    <SheetTab>Sheet1</SheetTab>
    <IconButton aria-label="新建工作表" $h={20}><Icon w={13} h={13}><path d="M6.500 0v13M0 6.500h13" /></Icon></IconButton>
    <Spacer />
    <SplitMark $v />
    <HScroll>
      <Icon w={4} h={6} color="none" fill="#8C98B5"><path d="M4 0v6L0 3z" /></Icon>
      <HThumb />
      <Icon w={4} h={6} color="none" fill="#8C98B5"><path d="M0 0v6l4-3z" /></Icon>
    </HScroll>
    <SplitMark $v />
  </TabsBar>
);

/* ---------- property panel ---------- */
const Panel = styled.aside`
  width: 261px;
  flex: none;
  display: flex;
  flex-direction: column;
  border-left: 1px solid ${c.line};
  padding-bottom: 7px;
`;
const PanelHead = styled.div`
  height: 32px;
  flex: none;
  display: flex;
  align-items: center;
  gap: 4px;
  padding: 0 2px 0 9px;
  color: #48536E;
`;
const PanelTabs = styled.div`
  height: 30px;
  flex: none;
  padding-left: 10px;
  border-bottom: 1px solid ${c.line};
`;
const PanelTab = styled.button`
  width: 92px;
  height: 30px;
  display: flex;
  align-items: center;
  justify-content: center;
  gap: 7px;
  background: ${c.pane};
  border: 1px solid ${c.line};
  border-bottom: 0;
  font-weight: 700;
`;
const PanelBody = styled.div`
  flex: 1;
  min-height: 0;
  overflow: hidden;
`;
const IconTabs = styled.div`
  height: 54px;
  display: flex;
  margin: 0 10px;
  border-bottom: 1px solid ${c.line};
`;
const IconTab = styled.button<{ $on?: boolean; $ml?: number }>`
  height: 54px;
  padding: 5px 4px 4px;
  margin-left: ${p => p.$ml ?? 0}px;
  display: flex;
  flex-direction: column;
  align-items: center;
  justify-content: space-between;
  color: ${p => (p.$on ? c.deepGreen : c.muted)};
  font-weight: ${p => (p.$on ? 700 : 400)};
  border-bottom: 2px solid ${p => (p.$on ? c.deepGreen : 'transparent')};
`;
const SubTabs = styled.div`
  height: 36px;
  display: flex;
  align-items: center;
  padding-left: 14px;
`;
const SubTab = styled.button<{ $on?: boolean }>`
  display: flex;
  align-items: center;
  gap: 9px;
  color: ${p => (p.$on ? c.deepGreen : c.ink)};
  font-weight: ${p => (p.$on ? 700 : 400)};
`;
const Row = styled.div<{ $h: number; $pt?: number; $indent?: number }>`
  height: ${p => p.$h}px;
  padding: ${p => p.$pt ?? 0}px 17px 0 ${p => p.$indent ?? 24}px;
  display: flex;
  align-items: center;
  position: relative;
`;
const SectionTitle = styled.h3`
  margin: 0;
  display: flex;
  align-items: center;
  gap: 5px;
  font-size: 12px;
  font-weight: 700;
  color: ${c.deepGreen};
`;
const OptionLabel = styled.label<{ $off?: boolean }>`
  display: flex;
  align-items: center;
  gap: 4px;
  color: ${p => (p.$off ? '#9AA0AC' : 'inherit')};
`;
const Radio = styled.input`
  appearance: none;
  width: 14px;
  height: 14px;
  flex: none;
  border: 1px solid #A2A6B2;
  border-radius: 50%;
  background: #fff;
  &:checked { background: radial-gradient(circle, ${c.ink} 3px, #fff 4px); }
`;
const Check = styled.input`
  appearance: none;
  width: 14px;
  height: 14px;
  flex: none;
  border: 1px solid #8F95A5;
  border-radius: 2px;
  background: #fff;
  &:disabled { border-color: #D0D3DA; background: none; }
`;
const FieldLabel = styled.label<{ $w?: number }>`
  width: ${p => (p.$w ? `${p.$w}px` : 'auto')};
`;
const SelectWrap = styled.span<{ $w: number; $h: number }>`
  width: ${p => p.$w}px;
  height: ${p => p.$h}px;
  display: flex;
  align-items: center;
  justify-content: space-between;
  padding: 0 4px 0 9px;
  position: relative;
  background: #fff;
  border: 1px solid #D6DAE2;
  border-radius: 2px;
`;
const CoverSelect = styled.select`
  position: absolute;
  inset: 0;
  width: 100%;
  appearance: none;
  border: 0;
  background: none;
`;
const Stepper = styled.span<{ $w: number }>`
  width: ${p => p.$w}px;
  height: 24px;
  display: flex;
  background: #fff;
  border: 1px solid #CBD0D9;
  border-radius: 2px;
`;
const StepButton = styled.button`
  width: 23px;
  display: flex;
  align-items: center;
  justify-content: center;
  &:first-child { border-right: 1px solid #CBD0D9; }
  &:last-child { border-left: 1px solid #CBD0D9; }
`;
const StepInput = styled.input`
  flex: 1;
  min-width: 0;
  border: 0;
  padding: 0 3px;
  background: none;
`;
const ColorPick = styled.button<{ $w: number; $h: number; $p: number }>`
  width: ${p => p.$w}px;
  height: ${p => p.$h}px;
  padding: ${p => p.$p}px 4px ${p => p.$p}px 2px;
  display: flex;
  align-items: center;
  justify-content: space-between;
  background: #fff;
  border: 1px solid ${c.line};
  border-radius: 2px;
`;
const ColorFill = styled.i<{ $bg: string; $w: number }>`
  width: ${p => p.$w}px;
  align-self: stretch;
  background: ${p => p.$bg};
`;
const Callout = styled.i<{ $l: number; $t: number; $w: number; $h: number }>`
  position: absolute;
  left: ${p => p.$l}px;
  top: ${p => p.$t}px;
  width: ${p => p.$w}px;
  height: ${p => p.$h}px;
  z-index: 3;
  border: 3px solid #FF0000;
  filter: drop-shadow(3px 3px 3px rgba(0, 0, 0, .65));
  pointer-events: none;
`;
const Swatches = styled.div`
  display: flex;
  gap: 6px;
  margin-left: auto;
`;
const Swatch = styled.button<{ $bg: string }>`
  width: 20px;
  height: 20px;
  border: 2px solid #DDDFE3;
  background: ${p => p.$bg};
`;
const PushRight = styled.div<{ $gap?: number }>`
  margin-left: auto;
  display: flex;
  align-items: center;
  gap: ${p => p.$gap ?? 0}px;
`;
const StopButton = styled.button`
  width: 30px;
  height: 30px;
  display: flex;
  align-items: center;
  justify-content: center;
  background: #fff;
  border: 1px solid #D6DAE2;
`;
const SliderBox = styled.div`
  width: 62px;
  margin: 0 4px 0 3px;
  position: relative;
`;
const SliderValue = styled.output<{ $mid?: boolean }>`
  position: absolute;
  top: -8px;
  left: ${p => (p.$mid ? 22 : -2)}px;
  color: #6B6B73;
`;
const Slider = styled.input<{ $fill: number }>`
  appearance: none;
  display: block;
  width: 62px;
  height: 16px;
  background: linear-gradient(90deg, ${c.green} ${p => p.$fill}%, #BBBEC6 ${p => p.$fill}%) 0 7px / 100% 2px no-repeat;
  &::-webkit-slider-thumb {
    appearance: none;
    width: 8px;
    height: 7px;
    margin-top: 4px;
    background: ${c.green};
    clip-path: polygon(50% 0, 100% 100%, 0 100%);
  }
`;
const Triangle = () => <svg width="7" height="7" viewBox="0 0 7 7" fill={c.deepGreen} aria-hidden="true"><path d="M7 0v7H0z" /></svg>;
const RoundSign = ({ plus }: { plus?: boolean }) => (
  <button aria-label={plus ? '增加' : '减少'}>
    <Icon w={16} h={16} color={c.muted}><circle cx="8" cy="8" r="7" fill="#fff" /><path d={plus ? 'M4 8h8M8 4v8' : 'M4 8h8'} /></Icon>
  </button>
);
const Sign = ({ plus }: { plus?: boolean }) => (
  <Icon w={8} h={8} color="#777C88" sw={2}><path d={plus ? 'M0 4h8M4 0v8' : 'M0 4h8'} /></Icon>
);
const OptionText = ({ text, k }: { text: string; k?: string }) => (
  <span>{text}{k && <>(<u>{k}</u>)</>}</span>
);

const markerOptions: [string, string | undefined][] = [['自动', 'U'], ['无', 'O'], ['内置', undefined]];
const fillOptions: [string, string][] = [['无填充', 'N'], ['纯色填充', 'S'], ['渐变填充', 'G'], ['图片或纹理填充', 'P'], ['图案填充', 'A'], ['自动', 'U']];
const sliders: [string, number, number, number, number][] = [['位置(O)', 0, 0, 100, 0], ['透明度(T)', 0, 0, 100, 0], ['亮度(B)', 0, -100, 100, 50]];
const gradientStyles = [
  'linear-gradient(135deg, #E9E9E9, #9B9B9B)',
  'radial-gradient(#EDEDED, #929292)',
  'radial-gradient(circle at 50% 60%, #F2F2F2, #9C9C9C 40%, #8C8C8C)',
  'conic-gradient(from 0deg at 50% 50%, #9A9A9A, #A8A8A8 40%, #D5D5D5 80%, #E6E6E6 88%, #7E7E7E 90%)',
];

const Properties = () => (
  <Panel>
    <PanelHead>
      属性 <Caret />
      <PushRight>
        <IconButton aria-label="固定"><Icon w={14} h={14}><path d="M4 .500h6v5l3 4.500H1l3-4.500zM7 10v4" /></Icon></IconButton>
        <IconButton aria-label="关闭"><Icon w={11} h={11}><path d="M.5.500l10 10M10.500.500l-10 10" /></Icon></IconButton>
      </PushRight>
    </PanelHead>
    <PanelTabs><PanelTab>系列选项 <svg width="8" height="5" viewBox="0 0 8 5" fill="#6B6F7A" aria-hidden="true"><path d="M0 0h8L4 5z" /></svg></PanelTab></PanelTabs>
    <PanelBody>
      <IconTabs>
        <IconTab $on>
          <Icon w={22} h={22}><path d="M2 8h12l-3-6-9 8 8 10 7-7M11 2l4 5" /><path d="M17.500 8.500h2v11h-2z" stroke="#4F7FE0" /></Icon>
          填充与线条
        </IconTab>
        <IconTab $ml={20}>
          <Icon w={22} h={22}><path d="M12 19.500H1.500v-17h19V9" /><path d="M16.500 9v8M12.500 13h8M13.500 16v4M11.500 18h4M18.500 16v5M16 18.500h5" stroke="#4F7FE0" /></Icon>
          效果
        </IconTab>
        <IconTab $ml={20}>
          <Icon w={22} h={22}><path d="M1.500 2.500h5v17h-5zM8.500 6.500h5v13h-5zM15.500 10.500h5v9h-5z" /></Icon>
          系列
        </IconTab>
      </IconTabs>
      <SubTabs>
        <SubTab>
          <Icon color="#6E9BF0"><path d="M4.500.500h6v3h-6zM.5 10.500h5v3h-5zM10.500 10.500h5v3h-5zM5 4L2.500 10M3 7h5" /><path d="M9.500 5.500h5v3h-5zM2.500 13.500h6v2h-6z" stroke="#1D4E89" /></Icon>
          线条
        </SubTab>
        <Rule $h={16} $m="0 7px 0 8px" />
        <SubTab $on>
          <Icon color="#6E9BF0"><path d="M4.500.500h6v3h-6zM9.500 5.500h6v3h-6zM2 7V4h3M7 7h2" /><path d="M.5 6.500h6v3h-6zM5.500 11.500h7v3h-7zM3 10v3h2" stroke="#1D4E89" /></Icon>
          标记
        </SubTab>
      </SubTabs>
      <Row $h={46} $pt={8} $indent={13}><SectionTitle><Triangle />数据标记选项</SectionTitle></Row>
      {markerOptions.map(([t, k]) => (
        <Row key={t} $h={31} $indent={25}>
          <OptionLabel><Radio type="radio" name="marker" defaultChecked={!k} /><OptionText text={t} k={k} /></OptionLabel>
        </Row>
      ))}
      <Row $h={32} $indent={35}>
        <FieldLabel $w={34} htmlFor="kind">类型</FieldLabel>
        <SelectWrap $w={47} $h={22}>
          <Icon w={9} h={9} color="#5B9BD5"><path d="M0 0l9 9M9 0L0 9M4.500 0v9" /></Icon>
          <CoverSelect id="kind"><option aria-label="星形" /></CoverSelect>
          <Caret />
        </SelectWrap>
      </Row>
      <Row $h={34} $indent={35}>
        <FieldLabel $w={34} htmlFor="size">大小</FieldLabel>
        <Stepper $w={78}>
          <StepButton aria-label="减小"><Sign /></StepButton>
          <StepInput id="size" defaultValue="11" />
          <StepButton aria-label="增大"><Sign plus /></StepButton>
        </Stepper>
      </Row>
      <Row $h={51} $pt={9} $indent={13}>
        <SectionTitle><Triangle />填充</SectionTitle>
        <PushRight>
          <ColorPick $w={111} $h={25} $p={2} aria-label="渐变颜色">
            <ColorFill $w={92} $bg="linear-gradient(#E60000, #D00000 35%, #760000)" /><Caret />
          </ColorPick>
        </PushRight>
        <Callout $l={114} $t={1} $w={130} $h={60} />
      </Row>
      {fillOptions.map(([t, k]) => (
        <Row key={t} $h={25} $indent={25}>
          <OptionLabel><Radio type="radio" name="fill" defaultChecked={k === 'G'} /><OptionText text={t} k={k} /></OptionLabel>
          {k === 'G' && <Callout $l={5} $t={-15} $w={110} $h={41} />}
        </Row>
      ))}
      <Row $h={25} $indent={25}><OptionLabel><Check type="checkbox" /><OptionText text="依数据点着色" k="V" /></OptionLabel></Row>
      <Row $h={59} $pt={24}>
        渐变样式(R)
        <Swatches>{gradientStyles.map((g, i) => <Swatch key={g} $bg={g} aria-label={`渐变样式${i + 1}`} />)}</Swatches>
      </Row>
      <Row $h={38}>
        <FieldLabel htmlFor="angle">角度(E)</FieldLabel>
        <PushRight $gap={8}>
          <svg width="28" height="28" viewBox="0 0 28 28" aria-hidden="true">
            <circle cx="15" cy="15" r="12.500" fill="#CFCFCF" />
            <circle cx="14" cy="14" r="12.500" fill="#F0F0F0" stroke="#555" />
            <circle cx="20" cy="13.500" r="2.500" fill="#E3E3E3" stroke="#888" />
          </svg>
          <Stepper $w={90}>
            <StepButton aria-label="减小"><Sign /></StepButton>
            <StepInput id="angle" defaultValue="90.0°" />
            <StepButton aria-label="增大"><Sign plus /></StepButton>
          </Stepper>
        </PushRight>
      </Row>
      <Row $h={36}>
        <svg width="146" height="30" viewBox="0 0 146 30" aria-hidden="true">
          <defs><linearGradient id="bar"><stop offset="0" stopColor="#E60000" /><stop offset=".4" stopColor="#D20000" /><stop offset="1" stopColor="#6E0000" /></linearGradient></defs>
          <rect x="9.500" y="1.500" width="129" height="15" fill="url(#bar)" stroke="#BBB" />
          <path d="M1.500 28.500V16L9 9.500l7.500 6.500v12.500z" fill="#E60000" stroke="#B5B5B5" strokeWidth="2" />
          <path d="M131.500 27.500V16l6.500-4.500 6.500 4.500v11.500z" fill="#760000" stroke="#5B0000" />
        </svg>
        <PushRight $gap={6}>
          <StopButton aria-label="增加色标"><Icon w={16} h={20} color="#999"><path d="M3.500 15.500V6l4-4.500 4 4.500v9.500z" fill="#D5D5D5" /><path d="M12 11v8M8 15h8" stroke="#5BAA2E" strokeWidth="2" /></Icon></StopButton>
          <StopButton aria-label="删除色标"><Icon w={16} h={20} color="#999"><path d="M3.500 15.500V6l4-4.500 4 4.500v9.500z" fill="#D5D5D5" /><path d="M8.500 12l7 7M15.500 12l-7 7" stroke="#EE5A36" strokeWidth="1.500" /></Icon></StopButton>
        </PushRight>
      </Row>
      <Row $h={28} $indent={34}>
        色标颜色(C)
        <PushRight><ColorPick $w={71} $h={20} $p={2} aria-label="色标颜色"><ColorFill $w={54} $bg="#E60000" /><Caret /></ColorPick></PushRight>
      </Row>
      {sliders.map(([label, value, min, max, fill]) => (
        <Row key={label} $h={36} $indent={34}>
          <FieldLabel htmlFor={label}>{label}</FieldLabel>
          <PushRight>
            <RoundSign />
            <SliderBox>
              <SliderValue $mid={fill > 0}>{value}%</SliderValue>
              <Slider id={label} type="range" min={min} max={max} defaultValue={value} $fill={fill} />
            </SliderBox>
            <RoundSign plus />
          </PushRight>
        </Row>
      ))}
      <Row $h={36} $indent={25}><OptionLabel $off><Check type="checkbox" disabled /><span>与形状一起旋转(W)</span></OptionLabel></Row>
    </PanelBody>
  </Panel>
);

/* ---------- side bar ---------- */
const Side = styled.nav`
  width: 43px;
  flex: none;
  display: flex;
  flex-direction: column;
  align-items: center;
  gap: 4px;
  padding: 10px 0 4px;
  border-left: 1px solid ${c.line};
`;
const Grip = styled.i`
  width: 20px;
  height: 4px;
  margin: 1px 0 9px;
  border: solid #C6CAD2;
  border-width: 1px 0;
`;
const SideRule = styled.i`
  width: 38px;
  height: 1px;
  margin-top: auto;
  background: ${c.line};
`;

const SideBar = () => (
  <Side>
    <Grip />
    <IconButton $w={32} $h={32} aria-label="推荐"><Icon><path d="M5 6q4-6 10-5.500Q15.500 6 10 11l-.5 3.500-2.500 1v-3l-3.500-3.500h-3l1-2.500zM2 11l-1 4M4 12l-2 3M5 14l-1 2" /><circle cx="10.500" cy="5.500" r="1.800" /></Icon></IconButton>
    <IconButton $w={32} $h={32} aria-label="选择"><Icon><path d="M3.500 1v12.500L7 10.500l2 5 2.500-1-2-4.500h4.500z" /></Icon></IconButton>
    <IconButton $w={32} $h={32} $on aria-label="属性"><Icon><circle cx="2.500" cy="4" r="2" /><path d="M4.500 4H16M0 12h10M14 12h2" /><circle cx="12" cy="12" r="2" /></Icon></IconButton>
    <IconButton $w={32} $h={32} aria-label="分析"><Icon color="#8F96A6"><path d="M1.500 1.500h2v2h-2zM5.500 1.500h10v2h-10zM1.500 5.500h2v9h-2zM7 13h6.500V6M11 8.500L13.500 6 16 8.500M9 10.500L6.500 13 9 15.500" /></Icon></IconButton>
    <IconButton $w={32} $h={32} aria-label="图库"><Icon><path d="M6 14.500H1.500v-7Q0 6 1.500 2.500q.5-1 2-1h9q1.500 0 2 1 1 2 0 4M1.500 7.500q2 1 3-1 2 2 4 0" /><path d="M8 11q3 0 4 4 0-6 3.500-8 1 8-4 8.500Q8 15 8 11zM11 9l1 3" fill="#DDE1E8" /></Icon></IconButton>
    <IconButton $w={32} $h={32} aria-label="智能"><Icon><path d="M5.500 13.500a6.500 6.500 0 1 1 5 0v2h-5z" /><path d="M9 3.500L5.500 8H8l-1 3.500L10.500 7H8z" /></Icon></IconButton>
    <IconButton $w={32} $h={32} aria-label="帮助"><Icon><path d="M8 14.500L6.500 13H.5V1.500H7l1 1 1-1h6.500V7M8 3v11" /><circle cx="12" cy="10.500" r="2.500" /><path d="M14 12.500l2 2" /></Icon></IconButton>
    <SideRule />
    <IconButton $w={32} $h={32} aria-label="更多"><Icon w={16} h={6} sw={1.5}><circle cx="2.500" cy="3" r="1.500" /><circle cx="8" cy="3" r="1.500" /><circle cx="13.500" cy="3" r="1.500" /></Icon></IconButton>
  </Side>
);

/* ---------- status bar ---------- */
const Status = styled.footer`
  height: 28px;
  flex: none;
  display: flex;
  align-items: center;
  padding: 0 8px 2px 0;
  border-top: 1px solid ${c.line};
`;
const ZoomSelect = styled.select`
  appearance: none;
  width: 32px;
  border: 0;
  background: none;
  padding: 0;
`;
const ZoomCaret = styled.span`
  margin: 0 6px 0 5px;
`;
const ZoomRange = styled.input`
  appearance: none;
  flex: none;
  width: 138px;
  height: 16px;
  margin: 0 8px 0 6px;
  background: linear-gradient(${c.ink}, ${c.ink}) 0 8px / 100% 1px no-repeat, linear-gradient(${c.ink}, ${c.ink}) 68px 5px / 1px 7px no-repeat;
  &::-webkit-slider-thumb {
    appearance: none;
    width: 12px;
    height: 12px;
    border: 1px solid #48536E;
    border-radius: 50%;
    background: #F2F2F2;
  }
`;

const StatusBar = () => (
  <Status>
    <Rule $h={14} $m="0 11px 0 0" />
    <IconButton aria-label="宏"><Icon><circle cx="3.500" cy="3.500" r="3" /><circle cx="3.500" cy="3.500" r="1.200" /><path d="M9 2.500h6.500v3H14v10H1.500v-3h10v3M3.500 12V8M14 5V3" /></Icon></IconButton>
    <Rule $h={14} $m="0 0 0 12px" />
    <Spacer />
    <IconButton $on aria-label="护眼模式"><Icon><circle cx="8" cy="10" r="5.500" /><ellipse cx="8" cy="10" rx="2.500" ry="3.500" /><path d="M8 8.500v3M8 .500v2.500M3 2l1 2M13 2l-1 2M.5 9l2.500-1.500M15.500 9L13 7.500" /></Icon></IconButton>
    <TextTool $gap={2} $mr={14} aria-label="阅读模式"><IconButton as="span" $w={22}><Icon><path d="M5.500 1.500h5v13h-5zM.5 5.500h15v5H.5z" /></Icon></IconButton><Caret /></TextTool>
    <Rule $h={14} $m="0 9px 0 0" />
    <IconButton $on aria-label="普通视图"><Icon><path d="M.5 1.500h15v13H.5zM.5 6h15M.5 10h15M5.500 1.500v13M10.500 1.500v13" /></Icon></IconButton>
    <IconButton $w={28} aria-label="分页预览"><Icon><path d="M.5.500h14v15H.5zM3 2.500h9.500v11H3zM7.500 2.500v11" /></Icon></IconButton>
    <IconButton $w={26} aria-label="页面布局"><Icon><path d="M.5 1.500h15v13H.5zM.5 9.500h9v-8M5.500 9V1.500" /></Icon></IconButton>
    <Rule $h={14} $m="0 11px 0 9px" />
    <ZoomSelect aria-label="缩放比例"><option>190%</option></ZoomSelect>
    <ZoomCaret><Caret /></ZoomCaret>
    <IconButton $w={20} aria-label="缩小"><Icon w={10} h={10} sw={2}><path d="M0 5h10" /></Icon></IconButton>
    <ZoomRange type="range" aria-label="缩放" min={0} max={100} defaultValue={65} />
    <IconButton $w={20} aria-label="放大"><Icon w={10} h={10} sw={2}><path d="M0 5h10M5 0v10" /></Icon></IconButton>
    <IconButton $w={30} aria-label="全屏"><Icon w={14} h={14}><path d="M.5 4V.500H4M10 .500h3.500V4M.5 10v3.500H4M10 13.500h3.500V10M.5.500l4 4M13.500.500l-4 4M.5 13.500l4-4M13.500 13.500l-4-4" /></Icon></IconButton>
  </Status>
);

/* ---------- floating overlays ---------- */
const Meter = styled.div`
  position: fixed;
  right: 0;
  top: 854px;
  z-index: 4;
  width: 10px;
  height: 59px;
  padding: 6px 1px 6px 3px;
  border-radius: 4px 0 0 4px;
  border: 1px solid #3A3F4E;
  border-right: 0;
  background: #565C6E;
`;
const MeterBars = styled.div`
  height: 45px;
  background:
    repeating-linear-gradient(transparent 0 2px, #565C6E 2px 3px),
    linear-gradient(#2C303C 28%, #F0B850 28%, #C4DC70 60%, #59D7C8);
`;
const Brand = styled.div`
  position: fixed;
  right: 10px;
  bottom: 8px;
  z-index: 5;
  display: flex;
  align-items: center;
  gap: 2px;
  opacity: .9;
  pointer-events: none;
`;
const BrandText = styled.div`
  display: flex;
  flex-direction: column;
  align-items: flex-start;
`;
const BrandName = styled.span`
  font: 700 21px/26px "Noto Sans CJK SC", sans-serif;
  color: #5B93D6;
`;
const BrandUrl = styled.span`
  font: 700 16px/16px "Liberation Sans", sans-serif;
  color: #5DBB80;
`;

export default function App() {
  return (
    <App_>
      <Global />
      <Title />
      <Menu />
      <RibbonBar />
      <Main>
        <Work>
          <FormulaBar>
            <NameBox><NameInput aria-label="名称框" defaultValue="图表  1" /><Caret /></NameBox>
            <IconButton $w={24} aria-label="浏览公式结果"><Icon w={17} h={17}><circle cx="7" cy="7" r="6" /><path d="M11.500 11.500l5 5M4.500 6h5M4.500 8.500h5" /></Icon></IconButton>
            <IconButton $w={26} aria-label="插入函数"><Fx>fx</Fx></IconButton>
            <FormulaInput aria-label="编辑栏" />
          </FormulaBar>
          <SheetArea>
            <SheetView>
              <Sheet />
              <Range />
              <Chart />
              <ChartToolbar />
            </SheetView>
            <VScroll><SplitMark /><CaretUp /><VThumb /><VEnd><Caret /></VEnd></VScroll>
          </SheetArea>
          <SheetTabs />
        </Work>
        <Properties />
        <SideBar />
      </Main>
      <StatusBar />
      <Meter><MeterBars /></Meter>
      <Brand>
        <svg width="42" height="40" viewBox="0 0 42 40" aria-hidden="true">
          <path d="M37 1Q10-1 3 16-2 30 10 33 5 22 14 12 22 3 37 1z" fill="#4B93DE" />
          <path d="M13 24Q15 13 27 12q12 0 13 8 0 11-17 17-8 2-13 1 15-4 18-13 1-7-7-5-5 1-8 4z" fill="#6CC58C" />
          <path d="M3 32q14 3 22-11-2 15-17 15-4-1-5-4z" fill="#4B93DE" />
        </svg>
        <BrandText><BrandName>极光下载站</BrandName><BrandUrl>www.xz7.com</BrandUrl></BrandText>
      </Brand>
    </App_>
  );
}
